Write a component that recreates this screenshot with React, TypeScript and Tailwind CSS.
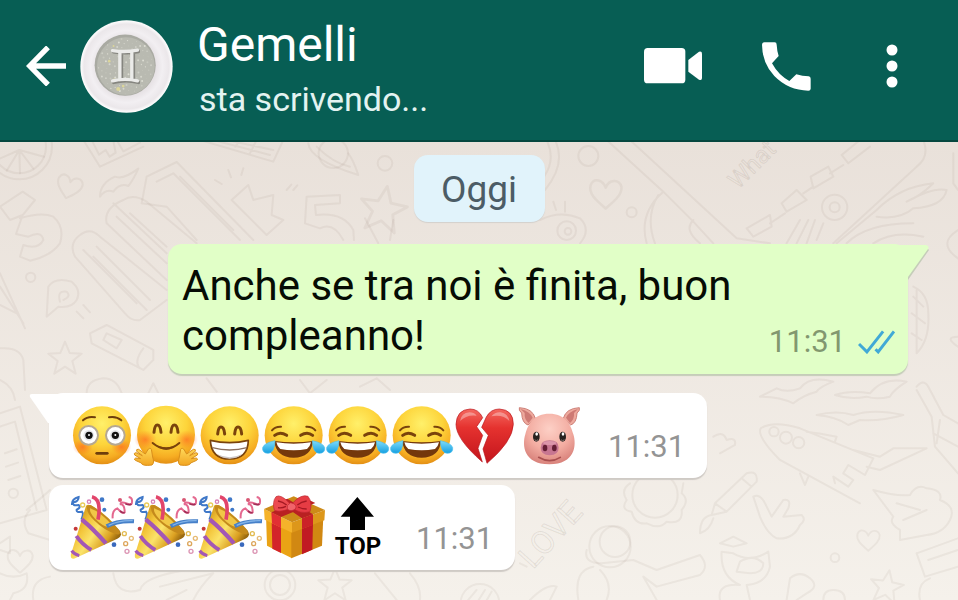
import React from "react";

function Defs() {
  return (
    <defs>
      <radialGradient id="face" cx="50%" cy="30%" r="72%">
        <stop offset="0" stopColor="#fff06a" />
        <stop offset="0.5" stopColor="#fdd43a" />
        <stop offset="0.82" stopColor="#f6ac22" />
        <stop offset="1" stopColor="#e08a12" />
      </radialGradient>
      <radialGradient id="blush" cx="50%" cy="50%" r="50%">
        <stop offset="0" stopColor="#ff5a1e" stopOpacity="0.6" />
        <stop offset="1" stopColor="#ff6a1e" stopOpacity="0" />
      </radialGradient>
      <linearGradient id="tear" x1="0" y1="0" x2="0" y2="1">
        <stop offset="0" stopColor="#7fdcfb" />
        <stop offset="1" stopColor="#159fe0" />
      </linearGradient>
      <linearGradient id="hand" x1="0" y1="0" x2="0" y2="1">
        <stop offset="0" stopColor="#ffd95a" />
        <stop offset="1" stopColor="#f2a522" />
      </linearGradient>
      <linearGradient id="heart" x1="0" y1="0" x2="0" y2="1">
        <stop offset="0" stopColor="#f4685f" />
        <stop offset="0.35" stopColor="#e5322f" />
        <stop offset="1" stopColor="#c3141c" />
      </linearGradient>
      <radialGradient id="pig" cx="50%" cy="30%" r="70%">
        <stop offset="0" stopColor="#fdd0c6" />
        <stop offset="0.6" stopColor="#f3ada2" />
        <stop offset="1" stopColor="#d9837c" />
      </radialGradient>
      <linearGradient id="cone" x1="0" y1="0.3" x2="0.75" y2="0.85">
        <stop offset="0" stopColor="#c98c12" />
        <stop offset="0.3" stopColor="#f3c53a" />
        <stop offset="0.55" stopColor="#fbe36a" />
        <stop offset="0.85" stopColor="#dba021" />
        <stop offset="1" stopColor="#9a6a10" />
      </linearGradient>
      <radialGradient id="rim" cx="50%" cy="50%" r="50%">
        <stop offset="0.6" stopColor="#e4dfe2" />
        <stop offset="0.78" stopColor="#f2eff2" />
        <stop offset="0.92" stopColor="#ebe7ea" />
        <stop offset="1" stopColor="#ffffff" />
      </radialGradient>
    </defs>
  );
}

/* Faint line drawings behind the conversation */
function Wallpaper() {
  const star = "M0 -50L14 -16L50 -14L22 8L32 46L0 25L-32 46L-22 8L-50 -14L-14 -16Z";
  const heart = "M0 38C-20 20 -42 4 -36 -18C-28 -38 -6 -30 0 -12C8 -32 32 -34 38 -14C40 6 18 22 0 38Z";
  return (
    <svg
      aria-hidden="true"
      className="absolute inset-0 h-full w-full"
      viewBox="0 142 958 458"
      preserveAspectRatio="xMidYMin slice"
      fill="none"
      stroke="#6b5a4c"
      strokeOpacity="0.07"
      strokeWidth="6"
      strokeLinejoin="round"
      strokeLinecap="round"
    >
      <Defs />
      <g transform="translate(0 140) scale(.3333)">
        <circle cx="58" cy="20" r="98" />
        <circle cx="58" cy="20" r="80" />
        <path d="M58 30L-10 60M58 30L20 92M58 30L60 100M58 30L100 86M58 30L132 50" />
        <path d="M250 0L300 80L430 20M275 0l22 44 20-14 12 20 18-12-6-30M350 0l20 34 50-26" />
        <path transform="translate(208 138) rotate(15)" d={heart} />
        <path d="M300 170Q300 130 345 110Q370 120 415 86Q400 120 385 138Q360 128 340 155Q318 145 300 170Z" />
        <path d="M0 200L68 155L105 180L60 235Q125 215 160 230Q195 260 180 310Q150 350 90 362L60 350L70 315Q115 330 130 300Q125 270 85 290L48 282L68 225L30 240Z" />
        <path d="M440 110L530 66L760 300M440 110L425 190L500 200L590 300M470 125L520 100L720 300M540 110L700 270" />
        <path d="M590 310L440 185Q400 160 370 180Q310 205 320 250L500 420M350 230L500 370M390 220L500 320M340 190L500 340" />
        <path d="M500 480L420 540Q395 545 375 520L225 350Q205 310 240 285Q270 260 300 290L500 450M250 330L410 490M290 320L450 480M280 350L440 510" />
        <path d="M695 180L745 135L760 180L820 165L815 225L850 240L800 285ZM645 120l20 12M685 90l8 22M730 85l-6 20M860 150l14-16M880 150l12-14" />
        <path d="M920 170L1020 165V190L945 195L948 225Q1030 215 1060 270L1062 300M920 170L915 250L960 265Q1000 245 1030 300" />
        <path transform="translate(1150 208) rotate(10) scale(1.4)" d={star} />
        <path d="M1095 235L1135 310M1180 240L1170 300" />
        <circle cx="1000" cy="40" r="44" />
        <path d="M925 10Q930 60 1075 105Q1060 60 1045 40M950 20Q1000 70 1050 80" />
        <circle cx="1155" cy="70" r="22" />
        <path d="M600 0L820 65L850 0M640 0L810 45M680 0L820 30M720 0l-14 20M770 0l-20 40" />
        <path d="M140 530L145 440Q165 410 215 425Q245 450 230 480Q215 505 175 500ZM180 485Q170 450 200 455Q215 470 190 480M230 515l20 20M250 495l20 22" />
        <circle cx="92" cy="412" r="14" />
        <path d="M0 400L75 565M0 440L70 550M0 495L50 520" />
        <path transform="translate(195 655)" d={star} />
        <path d="M270 580L320 555L460 630V660L430 690L275 610ZM310 600L320 580L365 600L350 625ZM420 685Q400 665 430 625" />
        <path d="M0 625Q60 620 70 660L75 750M0 720Q40 740 45 780M260 760Q260 720 310 715Q350 715 365 760M440 770L460 730L480 770M900 720l30 40 50-40M1080 740l50-25 40 35M620 715l30 40" />
        <path d="M0 820L60 800L140 1110M0 860L45 845L110 1110M0 1150L140 1110M15 940l35 -12M18 980l36 -12M25 1020l36 -12" />
        <circle cx="40" cy="1060" r="14" />
        <path d="M80 1110Q140 1060 150 1050M85 1180L150 1200M90 1110Q60 1140 85 1180M0 1210L30 1190V1240L0 1230" />
        <path transform="translate(60 1260)" d={heart} />
        <path d="M0 1300Q40 1320 80 1300Q90 1350 40 1360L30 1380M100 1380Q90 1320 150 1310" />
        <path d="M340 1300Q350 1370 420 1350Q430 1310 560 1290M480 1340L640 1300Q600 1340 580 1380M500 1380L560 1350" />
        <circle cx="840" cy="1335" r="46" />
        <circle cx="840" cy="1335" r="30" />
        <path transform="translate(1005 1335)" d={star} />
        <path d="M1125 1300L1190 1380M1230 1300Q1265 1340 1260 1380" />
        <circle cx="1440" cy="1390" r="58" />
        <path d="M1405 1380l25-30M1430 1390l25-40M1455 1390l20-35" />
      </g>
      <g transform="translate(540 140) scale(.3333)">
        <circle cx="145" cy="48" r="30" />
        <path transform="translate(197 158) scale(1.25)" d={heart} />
        <circle cx="275" cy="217" r="15" />
        <path d="M45 0Q80 70 15 150M20 0Q48 60 12 110" />
        <path d="M0 240Q60 210 120 235Q155 270 120 310M40 185l8 25M75 185v30" />
        <circle cx="80" cy="272" r="28" />
        <circle cx="84" cy="274" r="10" />
        <path d="M200 0L370 155L460 245L520 310M270 0L590 295L690 310M370 155Q295 220 320 310M355 165Q315 230 345 310M460 240Q430 270 480 310" />
        <path d="M620 265L690 225L695 260L640 290ZM690 250L735 220M725 190L770 150L800 180L740 215ZM790 160L820 140M812 110L865 80L880 110L820 145ZM870 100L910 75M905 45L960 0M905 45L925 70L990 20" />
        <path d="M1150 0Q1170 50 1130 80L880 310M740 310L780 240M770 310L805 240M800 310L825 240M830 300L850 250" />
        <circle cx="884" cy="202" r="38" />
        <circle cx="884" cy="202" r="15" />
        <path d="M890 310L1010 210Q1080 140 1180 130Q1140 170 1100 185Q1180 140 1220 150Q1210 200 1120 205Q1080 240 1010 230M920 310Q980 250 1120 250M1000 310Q1060 270 1150 290M1254 270Q1190 310 1254 355M1240 40V130L1254 150" />
        <path d="M1120 440Q1165 460 1165 520Q1170 600 1130 640M1120 470L1150 500M1115 520L1155 550M1115 580L1145 600M1130 450V640M1254 590Q1210 590 1254 620" />
      </g>
      <text transform="translate(738 190) rotate(-45)" className="font-['Roboto']" fontSize="24" strokeWidth="1" strokeOpacity="0.12">
        What
      </text>
      <g transform="translate(520 370) scale(.3333)">
        <path d="M720 80L770 55Q800 70 840 55Q870 15 940 35Q900 50 890 65Q850 75 820 100Q780 80 720 80ZM945 75Q990 60 1050 70Q1090 20 1160 35Q1120 60 1110 80Q1070 90 1040 80Q990 90 945 75ZM890 135Q950 120 1000 135Q1060 115 1150 135Q1080 155 1020 150L985 165Q950 140 890 135Z" />
        <path d="M1020 400L780 270Q710 200 722 175Q760 150 840 175L1060 265L1035 315L985 285L970 310L1000 330L985 350L940 320L945 340M860 185Q900 190 950 200L945 215M1000 240L1080 260L1120 235L1220 235L1080 300L1040 290M840 310L855 345L865 320" />
        <circle cx="762" cy="185" r="14" />
        <circle cx="798" cy="203" r="18" />
        <circle cx="836" cy="218" r="17" />
        <path d="M1190 50Q1210 25 1225 50L1270 135L1314 160M1190 60L1235 140L1245 230L1314 310M1260 150L1250 220M1240 190l74 40" />
        <path d="M580 200Q610 180 620 210Q650 200 645 225L600 250" />
        <path d="M330 340Q300 360 320 390Q300 420 335 425Q345 465 380 460Q420 480 440 455Q490 465 485 420Q510 390 485 370L490 340" />
        <circle cx="405" cy="375" r="68" />
        <path d="M585 400L680 310Q715 300 710 335L620 425ZM585 400L575 435L620 425M575 435Q540 440 540 490Q570 480 580 445M665 325L695 350" />
        <path d="M700 380Q720 370 735 400L755 440L790 390Q815 385 805 415L790 440L845 435Q860 450 840 465Q820 510 770 505Q740 490 720 440Z" />
        <path d="M1060 360Q1130 380 1170 375Q1190 340 1220 355Q1270 360 1260 390Q1310 410 1290 450Q1270 490 1220 495L1140 510V480Q1105 460 1120 440ZM1130 400L1200 420M1150 450L1220 420" />
        <path transform="translate(1045 508) scale(.9)" d={heart} />
        <circle cx="945" cy="563" r="13" />
        <circle cx="270" cy="530" r="62" />
        <circle cx="285" cy="515" r="46" />
        <path d="M200 540Q190 580 245 580L340 570L410 600L540 555Q570 590 540 615L410 650L370 620L410 690M220 590Q160 600 175 690M240 600Q280 640 260 690M0 580l20 10M30 690Q80 640 110 650L90 690" />
        <path d="M605 545L640 550Q690 580 745 545L750 590Q740 640 680 645L690 690M605 545Q600 620 660 645Q590 640 600 690M600 520L640 500L680 520L640 530ZM660 575Q700 550 730 580Q730 610 690 610L650 605Z" />
        <path transform="translate(1100 650) rotate(10)" d={star} />
        <path d="M800 690L810 625Q840 600 870 625Q900 650 860 670L830 690M910 690Q910 660 940 660Q975 660 975 690M1190 550L1314 505M1190 550L1215 620L1314 590M1200 690Q1190 640 1230 625M1225 570L1314 540" />
      </g>
      <text transform="translate(533 570) rotate(-48)" className="font-['Roboto']" fontSize="32" strokeWidth="1" strokeOpacity="0.12">
        LOVE
      </text>
    </svg>
  );
}

function Emoji({ label, children }: { label: string; children: React.ReactNode }) {
  return (
    <svg role="img" aria-label={label} viewBox="0 0 192 192" className="size-16 shrink-0 overflow-visible">
      {children}
    </svg>
  );
}

function Flushed() {
  return (
    <Emoji label="Faccina imbarazzata">
      <circle cx="96" cy="97" r="87" fill="url(#face)" />
      <ellipse cx="38" cy="132" rx="30" ry="24" fill="url(#blush)" />
      <ellipse cx="154" cy="132" rx="30" ry="24" fill="url(#blush)" />
      <g fill="#fff" stroke="#b5a892" strokeWidth="6">
        <circle cx="56" cy="97" r="28" />
        <circle cx="136" cy="97" r="28" />
      </g>
      <g fill="#e6e7ea">
        <circle cx="56" cy="97" r="16" />
        <circle cx="136" cy="97" r="16" />
      </g>
      <circle cx="57" cy="97" r="11" fill="#111" />
      <circle cx="136" cy="97" r="11" fill="#111" />
      <circle cx="57" cy="96" r="3" fill="#fff" />
      <circle cx="136" cy="96" r="3" fill="#fff" />
      <g fill="none" stroke="#6e3e0c" strokeWidth="6" strokeLinecap="round">
        <path d="M39 52Q53 39 75 43" />
        <path d="M117 43Q139 39 154 52" />
        <path d="M80 151H112" strokeWidth="8" />
      </g>
    </Emoji>
  );
}

function Hug() {
  const hand = (
    <path
      d="M54 186Q24 190 22 180L4 172Q-2 168 5 165L20 167L2 156Q-2 150 6 149L25 158L8 145Q6 137 14 139L34 153L43 138Q52 132 53 144L56 162Q62 180 54 186Z"
      fill="url(#hand)"
      stroke="#d98f1c"
      strokeWidth="3"
    />
  );
  return (
    <Emoji label="Abbraccio">
      <circle cx="96" cy="95" r="87" fill="url(#face)" />
      <ellipse cx="34" cy="110" rx="34" ry="28" fill="url(#blush)" />
      <ellipse cx="158" cy="110" rx="34" ry="28" fill="url(#blush)" />
      <g fill="none" stroke="#7a430c" strokeWidth="9" strokeLinecap="round">
        <path d="M60 88Q62 66 70 66Q79 66 81 88" />
        <path d="M111 88Q113 66 121 66Q130 66 132 88" />
        <path d="M56 120Q97 154 136 120" strokeWidth="6" />
      </g>
      <path d="M56 120Q97 160 136 120Q97 146 56 120Z" fill="#7a430c" />
      {hand}
      <g transform="translate(192 0) scale(-1 1)">{hand}</g>
    </Emoji>
  );
}

function Grin() {
  return (
    <Emoji label="Sorriso">
      <circle cx="95" cy="97" r="87" fill="url(#face)" />
      <g fill="none" stroke="#7a430c" strokeWidth="9" strokeLinecap="round">
        <path d="M59 93Q61 72 69 72Q78 72 80 93" />
        <path d="M110 93Q112 72 120 72Q129 72 131 93" />
      </g>
      <path d="M37 112Q95 126 151 112Q150 168 95 168Q40 168 37 112Z" fill="#fff" stroke="#7a430c" strokeWidth="5" strokeLinejoin="round" />
      <path d="M43 134Q95 148 147 134" fill="none" stroke="#8b6f5e" strokeWidth="4" />
      <path d="M57 153Q95 172 133 153Q118 167 95 167Q72 167 57 153Z" fill="#cfc8c8" />
    </Emoji>
  );
}

function Joy() {
  return (
    <Emoji label="Lacrime di gioia">
      <circle cx="95" cy="97" r="87" fill="url(#face)" />
      <g fill="none" stroke="#7a430c" strokeLinecap="round">
        <path d="M30 82Q40 70 57 71" strokeWidth="6" />
        <path d="M133 71Q150 70 160 82" strokeWidth="6" />
        <path d="M38 97Q54 84 74 97" strokeWidth="9" />
        <path d="M116 97Q136 84 152 97" strokeWidth="9" />
      </g>
      <path d="M37 114Q95 122 153 114Q148 164 95 164Q42 164 37 114Z" fill="#74380c" />
      <path d="M43 118Q95 126 147 118Q144 132 135 138Q95 146 55 138Q46 132 43 118Z" fill="#fff" />
      <path
        d="M39 113Q38 150 18 151Q0 150 2 134Q6 120 39 113Z"
        fill="url(#tear)"
        stroke="#49bdee"
        strokeWidth="2"
      />
      <path
        d="M151 113Q152 150 172 151Q190 150 188 134Q184 120 151 113Z"
        fill="url(#tear)"
        stroke="#49bdee"
        strokeWidth="2"
      />
    </Emoji>
  );
}

function BrokenHeart() {
  return (
    <Emoji label="Cuore spezzato">
      <g fill="url(#heart)" stroke="#b8141b" strokeWidth="2" strokeLinejoin="round">
        <path d="M86 44Q74 18 48 18Q8 20 6 64Q6 108 85 177L72 136L86 97L68 71Z" />
        <path d="M97 42Q110 18 136 18Q178 20 178 64Q176 116 99 181L87 138L103 97L83 73Z" />
      </g>
      <path d="M18 54Q22 30 46 28Q60 28 68 38Q38 34 18 54Z" fill="#fff" opacity="0.35" />
      <path d="M112 40Q124 26 140 28Q162 32 166 54Q148 34 112 40Z" fill="#fff" opacity="0.35" />
    </Emoji>
  );
}

function Pig() {
  const ear = (
    <>
      <path d="M52 46Q44 16 4 14Q1 22 11 30Q12 60 30 66Z" fill="#eea99d" stroke="#cd8078" strokeWidth="3" strokeLinejoin="round" />
      <path d="M8 18Q36 26 44 44L32 60Q18 48 20 30Z" fill="#ce7a74" />
    </>
  );
  return (
    <Emoji label="Maialino">
      {ear}
      <g transform="translate(188 0) scale(-1 1)">{ear}</g>
      <path
        d="M94 32C140 32 158 62 166 94C176 126 172 184 94 184C16 184 12 126 22 94C30 62 48 32 94 32Z"
        fill="url(#pig)"
      />
      <g fill="#28211f">
        <ellipse cx="55" cy="101" rx="10" ry="15" />
        <ellipse cx="134" cy="101" rx="10" ry="15" />
      </g>
      <g fill="#fff">
        <ellipse cx="56" cy="93" rx="4" ry="5" />
        <ellipse cx="135" cy="93" rx="4" ry="5" />
      </g>
      <path d="M50 110Q55 117 60 110M129 110Q134 117 139 110" fill="none" stroke="#8d7a74" strokeWidth="3" />
      <path d="M62 163Q95 183 127 163" fill="none" stroke="#a94f4f" strokeWidth="5" strokeLinecap="round" />
      <path d="M95 112Q122 112 122 134Q122 156 95 157Q68 156 68 134Q68 112 95 112Z" fill="#c77691" />
      <ellipse cx="95" cy="120" rx="20" ry="6" fill="#dc96aa" />
      <ellipse cx="81" cy="135" rx="7" ry="10" fill="#651f35" />
      <ellipse cx="109" cy="135" rx="7" ry="10" fill="#651f35" />
    </Emoji>
  );
}

function Popper() {
  return (
    <Emoji label="Coriandoli">
      <path d="M6 30Q4 12 26 6Q26 20 10 22Q6 34 26 30Q34 38 20 44Q18 54 36 50Q42 56 34 74" fill="none" stroke="#3f78c8" strokeWidth="6" />
      <path d="M48 33Q52 26 62 31Q104 52 148 106Q160 122 142 131L12 191Q0 193 3 178Z" fill="url(#cone)" />
      <path d="M52 32Q60 27 68 34Q112 60 146 104Q156 120 140 118Q104 108 72 76Q46 50 52 32Z" fill="#c48a1c" />
      <path d="M60 40Q90 50 126 90Q110 106 76 72Q58 54 60 40Z" fill="#f1c747" />
      <g fill="none" stroke="#a357b5">
        <path d="M35 73Q68 100 108 145" strokeWidth="13" />
        <path d="M19 123Q36 148 64 165" strokeWidth="12" />
        <path d="M5 167Q12 178 28 182" strokeWidth="9" />
      </g>
      <path d="M66 5Q96 12 84 74" fill="none" stroke="#e2456b" strokeWidth="11" />
      <path d="M110 94Q142 76 192 79" fill="none" stroke="#4680c9" strokeWidth="12" />
      <path d="M116 91Q146 76 188 77" fill="none" stroke="#82b3e8" strokeWidth="4" />
      <path d="M128 70Q126 46 142 40Q158 58 164 52Q164 28 152 28Q150 18 172 26Q188 34 186 16Q186 8 176 6" fill="none" stroke="#e4688f" strokeWidth="6" />
      <path d="M150 48Q160 56 164 52M166 26Q180 32 184 26" fill="none" stroke="#a22e57" strokeWidth="5" />
      <g fill="none" strokeWidth="4">
        <circle cx="38" cy="30" r="6" stroke="#e9cb57" />
        <circle cx="57" cy="20" r="5" stroke="#d884b8" />
        <circle cx="163" cy="116" r="6" stroke="#e2bb50" />
        <circle cx="167" cy="146" r="6" stroke="#dda65b" />
        <circle cx="184" cy="130" r="6" stroke="#e6ba73" />
        <circle cx="171" cy="169" r="6" stroke="#dc95b4" />
      </g>
      <circle cx="96" cy="14" r="7" fill="#3f78c8" />
      <circle cx="103" cy="44" r="6" fill="#3f78c8" />
      <circle cx="132" cy="149" r="7" fill="#3a69bd" />
      <circle cx="17" cy="101" r="6" fill="#c53939" />
      <circle cx="150" cy="15" r="6" fill="#d85774" />
    </Emoji>
  );
}

function Gift() {
  return (
    <Emoji label="Regalo">
      <path d="M12 60L90 100V190L15 152Z" fill="#eaa315" />
      <path d="M88 100L184 64L180 152L88 190Z" fill="#d18812" />
      <path d="M29 78L57 92V174L31 161Z" fill="#d3242a" />
      <path d="M120 96L153 82L151 164L120 178Z" fill="#c11a23" />
      <path d="M6 42L90 82V113L8 74Z" fill="#f5b32a" />
      <path d="M90 82L189 45L187 76L90 113Z" fill="#dd971a" />
      <path d="M6 42L95 4L189 45L90 82Z" fill="#cd8b18" />
      <path d="M28 52L57 66V98L30 85Z" fill="#e22f34" />
      <path d="M120 70L153 58V90L120 102Z" fill="#cb2128" />
      <path d="M28 52L130 10L160 24L57 66ZM120 70L50 22L76 11L153 58Z" fill="#b92022" />
      <g stroke="#bd2630" strokeWidth="2" strokeLinejoin="round">
        <path d="M82 24Q56 -4 42 5Q30 20 37 46Q60 54 86 38Z" fill="#ec4a50" />
        <path d="M92 24Q118 -4 138 4Q152 22 144 50Q112 58 92 38Z" fill="#e63c44" />
        <path d="M86 23Q72 30 76 42Q86 52 100 42Q108 28 86 23Z" fill="#f2636a" />
      </g>
      <path d="M48 18Q62 20 74 30M48 38Q60 40 72 34M134 18Q118 20 106 30M134 42Q120 42 108 36" fill="none" stroke="#a51823" strokeWidth="4" />
    </Emoji>
  );
}

function Top() {
  return (
    <Emoji label="Top">
      <path d="M94 6L144 65H117V105H72V65H44Z" fill="#000" />
      <text x="96" y="177" textAnchor="middle" fontSize="72" className="font-['Roboto'] font-bold">
        TOP
      </text>
    </Emoji>
  );
}

function Avatar() {
  return (
    <svg role="img" aria-label="Gemelli" viewBox="0 0 280 280" className="size-[93px] shrink-0">
      <circle cx="140" cy="140" r="139" fill="url(#rim)" />
      <circle cx="136" cy="136" r="92" fill="#a9aaa2" />
      <circle cx="138" cy="139" r="87" fill="#b9bab1" />
      <g fill="#e9e9df">
        {Array.from({ length: 110 }, (_, i) => {
          const a = i * 2.4;
          const d = Math.sqrt(i / 110) * 84;
          return (
            <circle
              key={i}
              cx={Math.round(138 + d * Math.cos(a))}
              cy={Math.round(138 + d * Math.sin(a))}
              r={(i % 3) + 1}
              opacity={0.3 + (i % 4) * 0.15}
            />
          );
        })}
      </g>
      <g fill="#dcd69a">
        <circle cx="88" cy="124" r="4" />
        <circle cx="115" cy="208" r="6" />
        <circle cx="130" cy="199" r="4" />
        <circle cx="103" cy="181" r="5" />
        <circle cx="101" cy="78" r="3" />
      </g>
      <g fill="none" strokeWidth="10" strokeLinecap="round">
        <path stroke="#85857f" d="M101 96Q139 102 176 95M101 188Q139 178 176 188M125 98V184M161 98V184" />
        <path stroke="#ebebe9" d="M98 92Q136 98 173 91M98 183Q136 174 173 183M120 96V180M156 96V180" />
      </g>
    </svg>
  );
}

function Received({ tail, children }: { tail?: boolean; children: React.ReactNode }) {
  return (
    <li className="relative flex w-fit items-end rounded-[14px] bg-white pt-[10px] pr-[22px] pb-[11px] pl-[21px] shadow-[0_2px_1px_#cfcac5]">
      {tail && (
        <svg aria-hidden="true" viewBox="0 0 34 32" className="absolute top-0 -left-5 h-8 w-[34px]">
          <path d="M3 1H34V30H19L1 4Q0 1 3 1Z" fill="#fff" />
        </svg>
      )}
      <div className="flex">{children}</div>
      <time className="ml-[26px] h-10 text-[31px] leading-10 text-[#949494]">11:31</time>
    </li>
  );
}

export default function App() {
  return (
    <div className="flex min-h-screen flex-col font-['Roboto',sans-serif]">
      <header className="flex h-[142px] items-center border-b-2 border-[#05473f] bg-[#075e54] pr-[60px] pb-2 pl-[26px] text-white">
        <button aria-label="Indietro" className="mr-[14px] shrink-0">
          <svg viewBox="0 0 120 120" className="block size-10" fill="none" stroke="#fff" strokeWidth="16">
            <path d="M66 4L11 60L66 116M12 60H120" />
          </svg>
        </button>
        <Avatar />
        <div className="ml-6 min-w-0 flex-1 pt-3">
          <h1 className="text-5xl leading-[54px]">Gemelli</h1>
          <p className="ml-0.5 text-[34px] leading-[54px] text-[#e3f3f1]">sta scrivendo...</p>
        </div>
        <button aria-label="Videochiamata" className="mr-[60px] shrink-0">
          <svg viewBox="72 85 174 108" className="block h-9 w-[58px]" fill="#fff">
            <rect x="72" y="85" width="124" height="106" rx="11" />
            <path d="M205 121L237 96Q246 93 246 102V175Q246 184 237 180L205 156Z" />
          </svg>
        </button>
        <button aria-label="Chiama" className="mr-[75px] shrink-0">
          <svg viewBox="425 66 147 147" className="block size-[49px]" fill="#fff">
            <path d="M432 67H463Q469 67 469 74Q470 92 475 108L455 130Q474 165 507 183L528 163Q546 169 565 169Q571 170 571 176V206Q571 212 564 212Q504 211 462 168Q426 130 425 74Q425 67 432 67Z" />
          </svg>
        </button>
        <button aria-label="Altro" className="shrink-0">
          <svg viewBox="0 0 24 88" className="block h-11 w-3" fill="#fff">
            <circle cx="12" cy="12" r="11" />
            <circle cx="12" cy="44" r="11" />
            <circle cx="12" cy="76" r="11" />
          </svg>
        </button>
      </header>

      <main className="relative flex-1 bg-gradient-to-b from-[#e9e1da] to-[#f5f1eb] pt-[13px] pb-[30px]">
        <Wallpaper />
        <div className="relative mx-auto h-[67px] w-[131px] rounded-[14px] bg-[#e1f3fb] text-center text-[37px] leading-[70px] text-[#4c5c66] shadow-[0_1px_1px_#d3d0cc]">
          Oggi
        </div>
        <ul className="relative mt-[22px] pr-[50px] pl-[49px]">
          <li className="relative mb-[19px] ml-auto flex w-[740px] max-w-full items-end rounded-[14px] bg-[#e1ffc7] pt-[17px] pr-[13px] pb-[13px] pl-[14px] shadow-[0_2px_1px_#c5cdb9]">
            <svg aria-hidden="true" viewBox="0 0 35 36" className="absolute top-0 -right-[21px] h-9 w-[35px]">
              <path d="M14 36L35 6L32 3L14 30Z" fill="#c5cdb9" />
              <path d="M0 1H32Q36 2 34 5L14 33H0Z" fill="#e1ffc7" />
            </svg>
            <p className="relative flex-1 text-[42px] leading-[50px] text-[#060c04]">Anche se tra noi è finita, buon compleanno!</p>
            <div className="flex h-[38px] items-center">
              <time className="text-[31px] leading-10 text-[#82976f]">11:31</time>
              <svg role="img" aria-label="Letto" viewBox="0 0 112 72" className="ml-3 h-6 w-[37px]" fill="none" stroke="#41a9d6" strokeWidth="9">
                <path d="M3 42L27 66L76 4M53 58L61 66L109 4" />
              </svg>
            </div>
          </li>
          <Received tail>
            <Flushed />
            <Hug />
            <Grin />
            <Joy />
            <Joy />
            <Joy />
            <BrokenHeart />
            <Pig />
          </Received>
          <li role="presentation" className="h-[7px]" />
          <Received>
            <Popper />
            <Popper />
            <Popper />
            <Gift />
            <Top />
          </Received>
        </ul>
      </main>
    </div>
  );
}
